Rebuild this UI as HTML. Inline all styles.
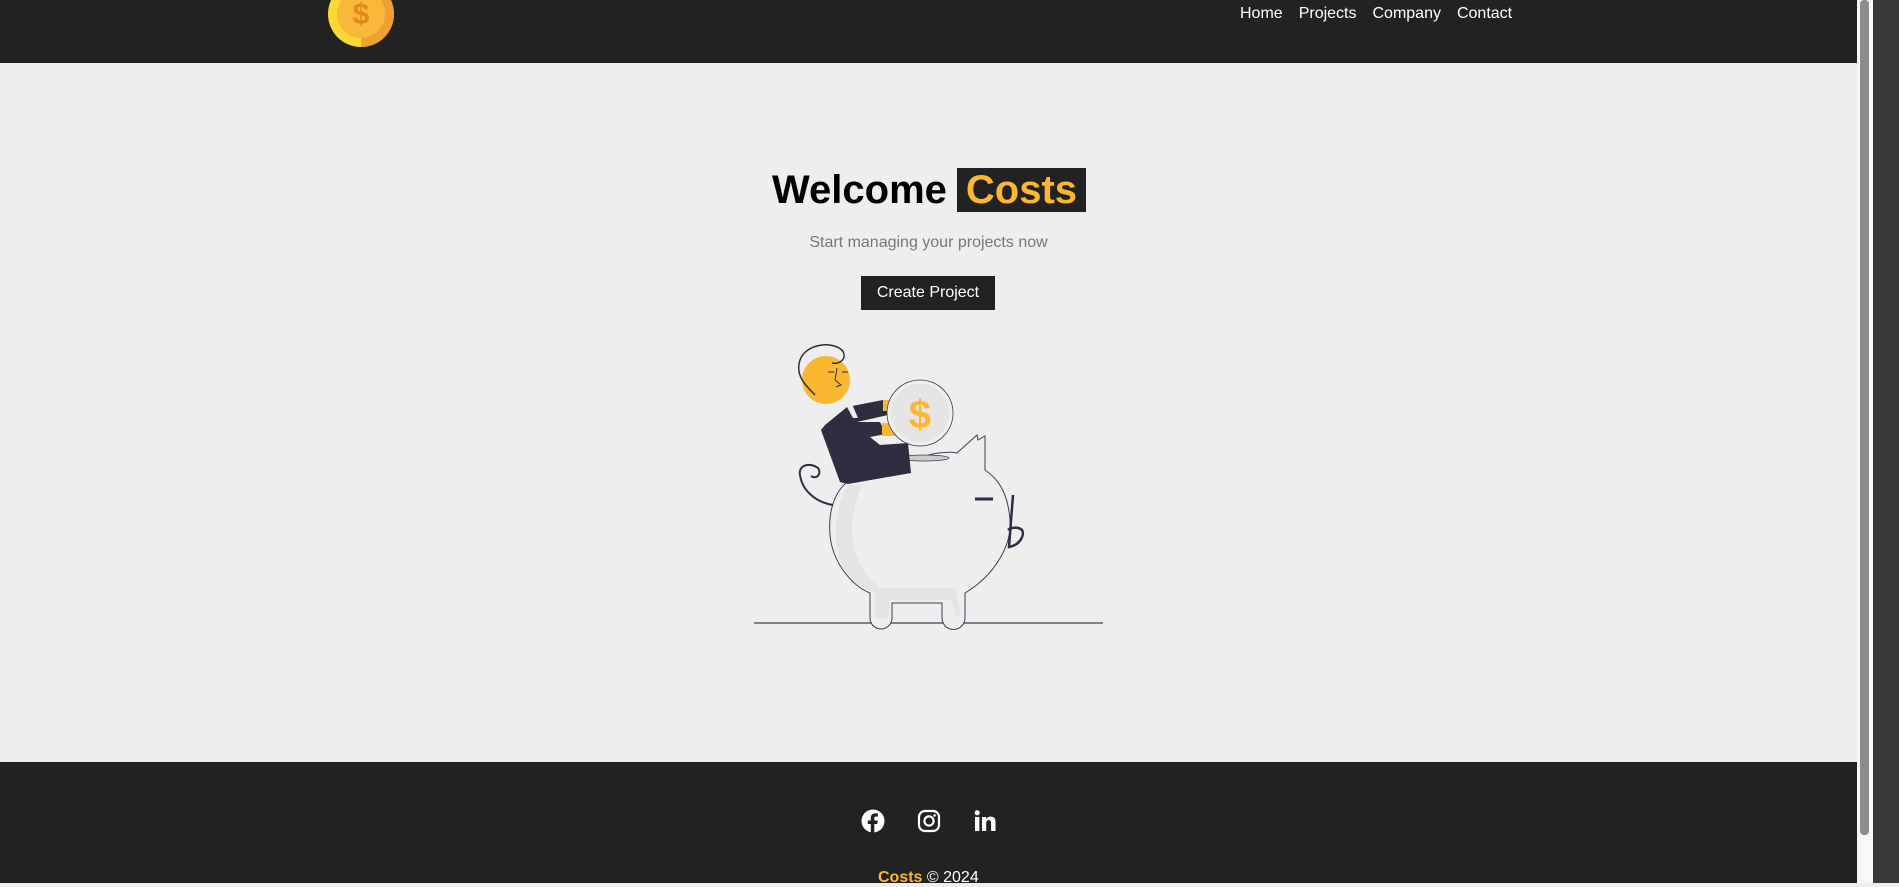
<!DOCTYPE html>
<html><head><meta charset="utf-8"><style>
*{margin:0;padding:0;box-sizing:border-box}
body{width:1899px;height:883px;overflow:hidden;background:#eee;font-family:"Liberation Sans",Arial,sans-serif;position:relative}
.hdr{position:absolute;left:0;top:0;width:1857px;height:63px;background:#222}
.nav{position:absolute;top:5px;left:1240px;color:#fff;font-size:16px;display:flex;gap:16px}
.main{position:absolute;left:0;top:63px;width:1857px;height:699px;background:#eee}
.ftr{position:absolute;left:0;top:762px;width:1857px;height:121px;background:#222}
h1{position:absolute;top:168px;left:772px;font-size:40px;font-weight:bold;color:#000;white-space:nowrap}
h1 span{background:#222;color:#fbb731;padding:0 9px;margin-left:10px}
.sub{position:absolute;top:234px;left:0;width:1857px;text-align:center;color:#777;font-size:16px}
.btn{position:absolute;left:861px;top:276px;width:134px;height:34px;background:#222;color:#fff;font-size:16px;text-align:center;line-height:34px}
.sb{position:absolute;left:1857px;top:0;width:16px;height:883px;background:#f8f8f8}
.thumb{position:absolute;left:1860px;top:0;width:9px;height:835px;background:#8c8c8c;border-radius:4px}
.side{position:absolute;left:1873px;top:0;width:26px;height:883px;background:#3a3a3a}
.copy{position:absolute;top:869px;left:878px;color:#fff;font-size:16px}
.copy b{color:#fbb731}
</style></head><body>
<div class="hdr">
<svg style="position:absolute;left:327px;top:-20px" width="68" height="68" viewBox="0 0 68 68"><circle cx="34" cy="34" r="33" fill="#fdd835"/><path d="M34 1a33 33 0 0 1 0 66z" fill="#f0a030"/><circle cx="34" cy="34" r="24" fill="#f8b93a"/><text x="34" y="44" font-size="30" font-weight="bold" text-anchor="middle" fill="#e08a1e" font-family="Liberation Sans">$</text></svg>
<div class="nav"><span>Home</span><span>Projects</span><span>Company</span><span>Contact</span></div>
</div>
<div class="main"></div>
<h1>Welcome<span>Costs</span></h1>
<div class="sub">Start managing your projects now</div>
<div class="btn">Create Project</div>
<svg style="position:absolute;left:740px;top:330px" width="380" height="300" viewBox="0 0 380 300">
<line x1="14" y1="293" x2="363" y2="293" stroke="#3f3d56" stroke-width="1.2"/>
<path d="M130 263 L130 288 a11 11 0 0 0 22 0 L152 273 L202 273 L202 288 a11 11 0 0 0 23 0 L225 263 C255 245 272 215 270 190 C268 165 260 150 245 140 L245 106 L238 110 L237 105 L217 123 C190 118 150 140 110 150 C95 160 88 180 90 205 C92 230 110 255 130 263 Z" fill="#eee" stroke="#3f3d56" stroke-width="1"/>
<path d="M108 155 C96 175 92 205 100 230 C108 250 120 258 135 262 L135 285 a8 8 0 0 0 14 0 L150 270 L212 270 L215 285 a6 6 0 0 0 6 0 L215 258 L140 258 C125 245 112 225 112 200 C112 180 118 165 122 155 Z" fill="#e4e4e4"/>
<ellipse cx="184" cy="128" rx="25" ry="3" fill="#ccc" stroke="#3f3d56" stroke-width="0.8"/>
<line x1="235" y1="169" x2="253" y2="169" stroke="#2f2e41" stroke-width="3"/>
<path d="M273 165 L269 217 C280 215 285 205 282 200 C278 196 270 198 268 200" fill="none" stroke="#2f2e41" stroke-width="2.5"/>
<path d="M93 175 C75 172 62 160 60 145 C58 135 70 132 78 138 C82 143 77 150 71 146" fill="none" stroke="#2f2e41" stroke-width="2"/>
<circle cx="86" cy="50" r="24" fill="#fbb731"/>
<path d="M75 65 C65 55 55 45 60 30 C65 15 90 10 102 20 C108 28 100 35 92 33" fill="none" stroke="#2f2e41" stroke-width="1.5"/>
<path d="M97 38 L95 50 L101 55 L96 57 M88 42 L94 42 M102 42 L108 42" fill="none" stroke="#2f2e41" stroke-width="1"/>
<path d="M85 95 L107 77 L143 70 L148 85 L117 92 L140 92 L146 104 L130 107 L140 115 L168 113 L171 143 L108 154 L100 152 L81 100 Z" fill="#2f2e41"/>
<path d="M107 77 L112 74 L118 88 L113 88 Z" fill="#eee"/>
<rect x="143" y="70" width="9" height="11" fill="#fbb731"/>
<rect x="142" y="93" width="14" height="13" fill="#fbb731"/>
<circle cx="180" cy="83" r="33" fill="#eee" stroke="#3f3d56" stroke-width="0.8"/>
<circle cx="180" cy="83" r="29" fill="#e4e4e4"/>
<text x="180" y="98" font-size="40" font-weight="bold" font-family="Liberation Sans" text-anchor="middle" fill="#fbb731">$</text>
</svg>
<div class="ftr"></div>
<svg style="position:absolute;left:861px;top:809px" width="24" height="24" viewBox="0 0 24 24"><circle cx="12" cy="12" r="11.5" fill="#fff"/><path d="M13.3 24V15h3l.5-3.5h-3.5V9.3c0-1 .3-1.7 1.8-1.7h1.8V4.5c-.3 0-1.4-.1-2.7-.1-2.7 0-4.4 1.6-4.4 4.5v2.6H6.8V15h3v9z" fill="#222"/></svg>
<svg style="position:absolute;left:917px;top:809px" width="24" height="24" viewBox="0 0 24 24"><rect x="2" y="2" width="20" height="20" rx="6" fill="none" stroke="#fff" stroke-width="2.2"/><circle cx="12" cy="12" r="4.6" fill="none" stroke="#fff" stroke-width="2.2"/><circle cx="17.6" cy="6.4" r="1.3" fill="#fff"/></svg>
<svg style="position:absolute;left:973px;top:809px" width="24" height="24" viewBox="0 0 24 24"><rect x="2" y="8" width="4.4" height="14" fill="#fff"/><circle cx="4.2" cy="3.8" r="2.5" fill="#fff"/><path d="M9 8h4.2v2c.7-1.3 2.3-2.4 4.5-2.4 4.2 0 4.8 2.7 4.8 6.2V22h-4.4v-7.2c0-1.7 0-3.7-2.3-3.7s-2.6 1.8-2.6 3.6V22H9z" fill="#fff"/></svg>
<div class="copy"><b>Costs</b> © 2024</div>
<div class="sb"></div><div class="thumb"></div><div class="side"></div>
</body></html>
